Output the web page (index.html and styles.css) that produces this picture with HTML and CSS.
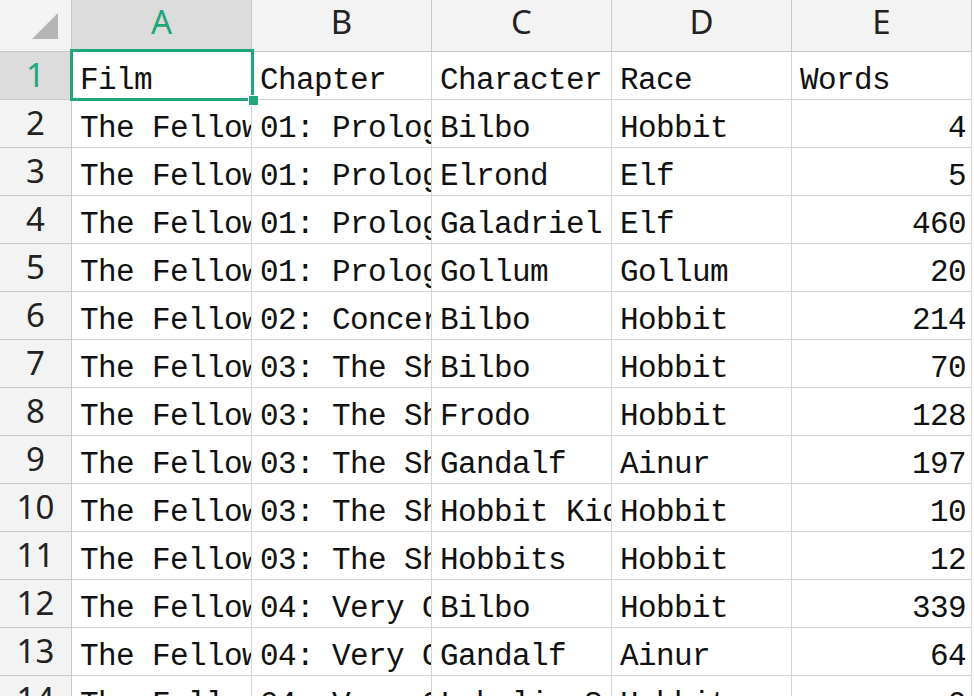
FILE: index.html
```html
<!DOCTYPE html>
<html>
<head>
<meta charset="utf-8">
<link rel="stylesheet" href="styles.css">
</head>
<body>
<div class="sheet">
  <div class="grid">
    <div class="corner"><svg width="30" height="30" viewBox="0 0 30 30"><polygon points="28,2 28,28 2,28" fill="#b5b5b5"/></svg></div>
    <div class="colh sel">A</div>
    <div class="colh">B</div>
    <div class="colh">C</div>
    <div class="colh">D</div>
    <div class="colh">E</div>

    <div class="rowh sel">1</div><div class="c">Film</div><div class="c">Chapter</div><div class="c">Character</div><div class="c">Race</div><div class="c">Words</div>
    <div class="rowh">2</div><div class="c">The Fellowship of the Ring</div><div class="c">01: Prologue</div><div class="c">Bilbo</div><div class="c">Hobbit</div><div class="c n">4</div>
    <div class="rowh">3</div><div class="c">The Fellowship of the Ring</div><div class="c">01: Prologue</div><div class="c">Elrond</div><div class="c">Elf</div><div class="c n">5</div>
    <div class="rowh">4</div><div class="c">The Fellowship of the Ring</div><div class="c">01: Prologue</div><div class="c">Galadriel</div><div class="c">Elf</div><div class="c n">460</div>
    <div class="rowh">5</div><div class="c">The Fellowship of the Ring</div><div class="c">01: Prologue</div><div class="c">Gollum</div><div class="c">Gollum</div><div class="c n">20</div>
    <div class="rowh">6</div><div class="c">The Fellowship of the Ring</div><div class="c">02: Concerning Hobbits</div><div class="c">Bilbo</div><div class="c">Hobbit</div><div class="c n">214</div>
    <div class="rowh">7</div><div class="c">The Fellowship of the Ring</div><div class="c">03: The Shire</div><div class="c">Bilbo</div><div class="c">Hobbit</div><div class="c n">70</div>
    <div class="rowh">8</div><div class="c">The Fellowship of the Ring</div><div class="c">03: The Shire</div><div class="c">Frodo</div><div class="c">Hobbit</div><div class="c n">128</div>
    <div class="rowh">9</div><div class="c">The Fellowship of the Ring</div><div class="c">03: The Shire</div><div class="c">Gandalf</div><div class="c">Ainur</div><div class="c n">197</div>
    <div class="rowh">10</div><div class="c">The Fellowship of the Ring</div><div class="c">03: The Shire</div><div class="c">Hobbit Kids</div><div class="c">Hobbit</div><div class="c n">10</div>
    <div class="rowh">11</div><div class="c">The Fellowship of the Ring</div><div class="c">03: The Shire</div><div class="c">Hobbits</div><div class="c">Hobbit</div><div class="c n">12</div>
    <div class="rowh">12</div><div class="c">The Fellowship of the Ring</div><div class="c">04: Very Old Friends</div><div class="c">Bilbo</div><div class="c">Hobbit</div><div class="c n">339</div>
    <div class="rowh">13</div><div class="c">The Fellowship of the Ring</div><div class="c">04: Very Old Friends</div><div class="c">Gandalf</div><div class="c">Ainur</div><div class="c n">64</div>
    <div class="rowh">14</div><div class="c">The Fellowship of the Ring</div><div class="c">04: Very Old Friends</div><div class="c">Lobelia Sackville-Baggins</div><div class="c">Hobbit</div><div class="c n">9</div>
  </div>
  <div class="selbox"><div class="handle"></div></div>
</div>
</body>
</html>
```

FILE: styles.css
```css
html, body {
  margin: 0;
  padding: 0;
  background: #ffffff;
  overflow: hidden;
  width: 974px;
  height: 696px;
}
.sheet {
  position: relative;
  width: 974px;
  height: 696px;
  overflow: hidden;
}
.grid {
  display: grid;
  grid-template-columns: 72px repeat(5, 180px);
  grid-template-rows: 52px repeat(14, 48px);
}
.corner, .colh, .rowh, .c {
  box-sizing: border-box;
  border-right: 1px solid #d4d4d4;
  border-bottom: 1px solid #d4d4d4;
  overflow: hidden;
  white-space: nowrap;
}
.corner {
  background: #f3f3f3;
  display: flex;
  align-items: flex-end;
  justify-content: flex-end;
  padding: 0 11px 10px 0;
  border-color: #c8c8c8;
}
.colh {
  background: #f3f3f3;
  border-color: #c8c8c8;
  font-family: "Noto Sans", "Open Sans", sans-serif;
  font-size: 33px;
  color: #222;
  display: flex;
  align-items: center;
  justify-content: center;
  line-height: 1;
  padding-bottom: 8px;
}
.rowh {
  background: #f3f3f3;
  border-color: #c8c8c8;
  font-family: "Noto Sans", "Open Sans", sans-serif;
  font-size: 33px;
  color: #222;
  display: flex;
  align-items: center;
  justify-content: center;
  line-height: 1;
  padding-bottom: 2px;
}
.colh.sel, .rowh.sel {
  background: #dcdcdc;
  color: #1fa67a;
}
.c {
  font-family: "Liberation Mono", "DejaVu Sans Mono", monospace;
  font-size: 31px;
  letter-spacing: -0.6px;
  color: #111;
  line-height: 47px;
  padding-top: 5px;
  padding-left: 8px;
  text-overflow: clip;
}
.c.n {
  text-align: right;
  padding-left: 0;
  padding-right: 5px;
}
.selbox {
  position: absolute;
  left: 70px;
  top: 49px;
  width: 184px;
  height: 52px;
  box-sizing: border-box;
  border: 3px solid #1fa67a;
}
.handle {
  position: absolute;
  right: -8px;
  bottom: -8px;
  width: 9px;
  height: 9px;
  background: #1fa67a;
  border: 1px solid #ffffff;
}
```
